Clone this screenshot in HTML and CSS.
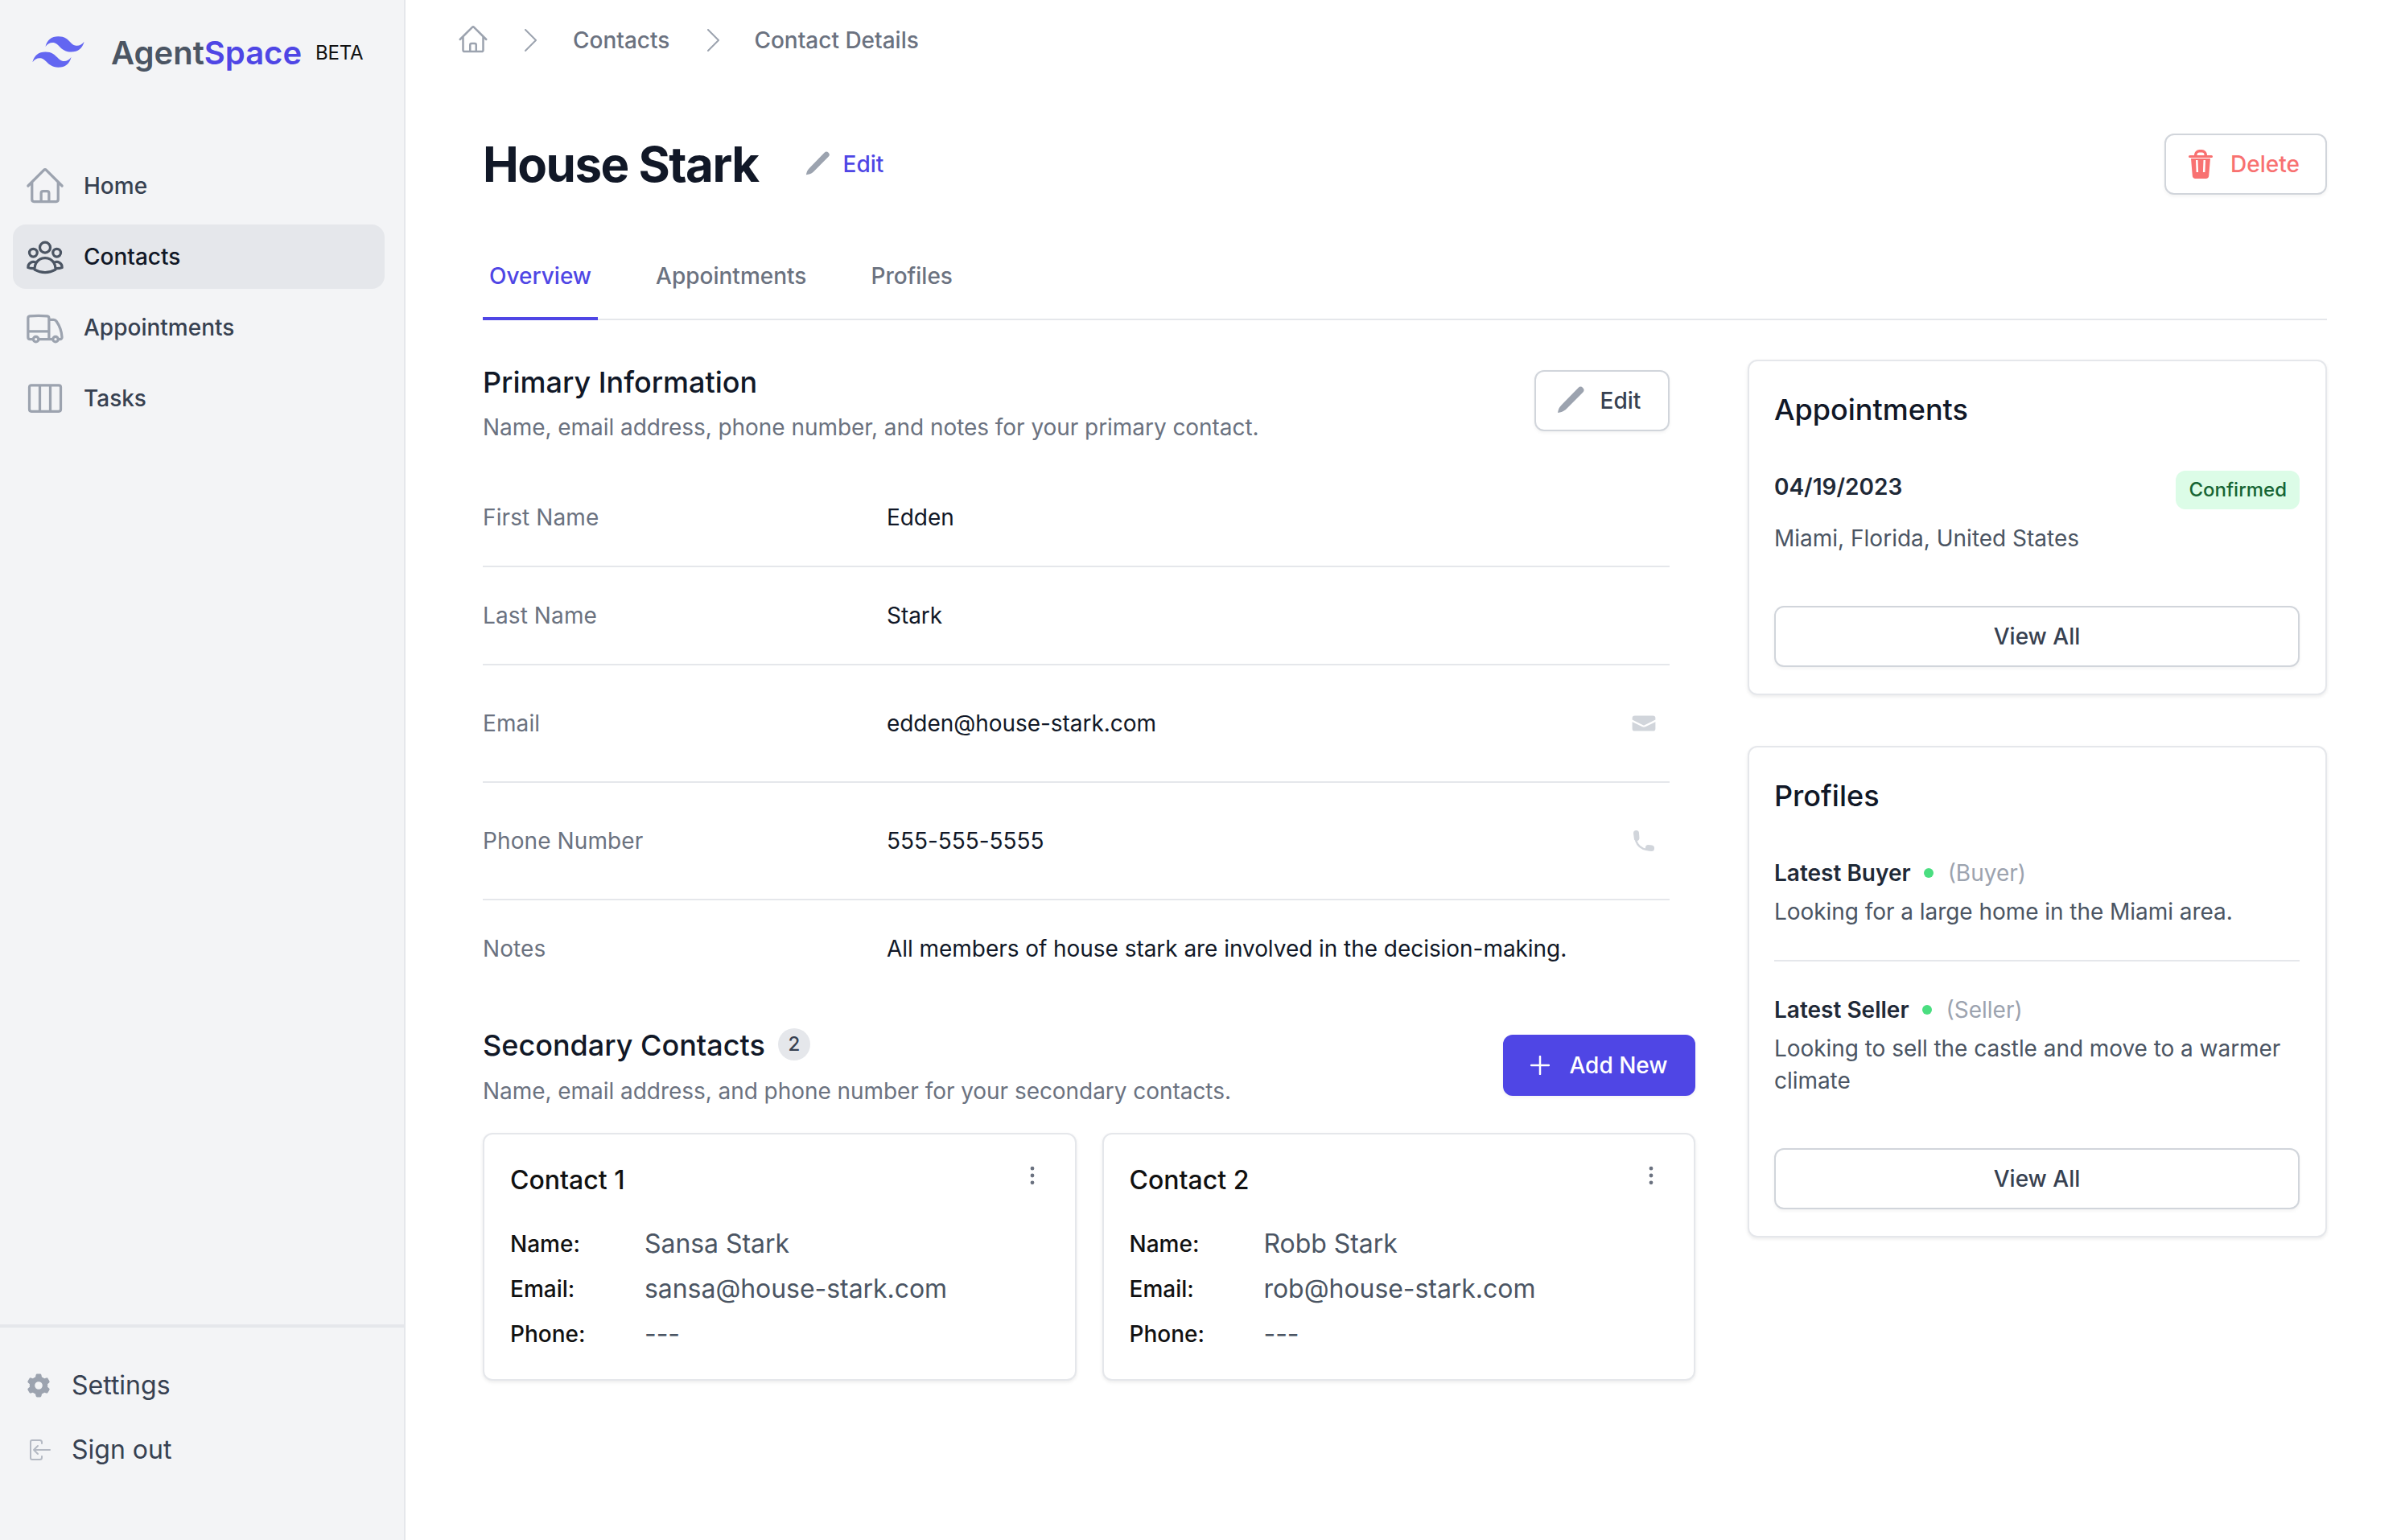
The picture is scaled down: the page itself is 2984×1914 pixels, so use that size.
FILE: index.html
```html
<!DOCTYPE html>
<html lang="en">
<head>
<meta charset="utf-8">
<title>House Stark</title>
<link rel="stylesheet" href="styles.css">
</head>
<body>
<div class="app">
  <aside class="sidebar">
    <div class="brand">
      <svg class="brand-mark" viewBox="0 0 24 24" fill="#6366f1"><path d="M12 6.036c-2.667 0-4.333 1.325-5 3.976 1-1.325 2.167-1.822 3.5-1.491.761.189 1.305.738 1.906 1.345C13.387 10.855 14.522 12 17 12c2.667 0 4.333-1.325 5-3.976-1 1.325-2.167 1.822-3.5 1.491-.761-.189-1.305-.738-1.906-1.345-.98-.99-2.115-2.134-4.594-2.134zM7 12c-2.667 0-4.333 1.325-5 3.976 1-1.325 2.167-1.822 3.5-1.491.761.189 1.305.738 1.906 1.345.98.99 2.115 2.134 4.594 2.134 2.667 0 4.333-1.325 5-3.976-1 1.325-2.167 1.822-3.5 1.491-.761-.189-1.305-.738-1.906-1.345C10.613 13.145 9.478 12 7 12z"/></svg>
      <span class="brand-name">Agent<span class="brand-accent">Space</span></span>
      <span class="brand-beta">BETA</span>
    </div>
    <nav class="nav">
      <a class="nav-item"><svg class="nav-icon" viewBox="0 0 24 24"><path d="M2.25 12l8.954-8.955c.44-.439 1.152-.439 1.591 0L21.75 12M4.5 9.75v10.125c0 .621.504 1.125 1.125 1.125H9.75v-4.875c0-.621.504-1.125 1.125-1.125h2.25c.621 0 1.125.504 1.125 1.125V21h4.125c.621 0 1.125-.504 1.125-1.125V9.75M8.25 21h8.25"/></svg>Home</a>
      <a class="nav-item is-active"><svg class="nav-icon" viewBox="0 0 24 24"><path d="M18 18.72a9.094 9.094 0 003.741-.479 3 3 0 00-4.682-2.72m.94 3.198l.001.031c0 .225-.012.447-.037.666A11.944 11.944 0 0112 21c-2.17 0-4.207-.576-5.963-1.584A6.062 6.062 0 016 18.719m12 0a5.971 5.971 0 00-.941-3.197m0 0A5.995 5.995 0 0012 12.75a5.995 5.995 0 00-5.058 2.772m0 0a3 3 0 00-4.681 2.72 8.986 8.986 0 003.74.477m.94-3.197a5.971 5.971 0 00-.94 3.197M15 6.75a3 3 0 11-6 0 3 3 0 016 0zm6 3a2.25 2.25 0 11-4.5 0 2.25 2.25 0 014.5 0zm-13.5 0a2.25 2.25 0 11-4.5 0 2.25 2.25 0 014.5 0z"/></svg>Contacts</a>
      <a class="nav-item"><svg class="nav-icon" viewBox="0 0 24 24"><path d="M8.25 18.75a1.5 1.5 0 01-3 0m3 0a1.5 1.5 0 00-3 0m3 0h6m-9 0H3.375a1.125 1.125 0 01-1.125-1.125V14.25m17.25 4.5a1.5 1.5 0 01-3 0m3 0a1.5 1.5 0 00-3 0m3 0h1.125c.621 0 1.129-.504 1.09-1.124a17.902 17.902 0 00-3.213-9.193 2.056 2.056 0 00-1.58-.86H14.25M16.5 18.75h-2.25m0-11.177v-.958c0-.568-.422-1.048-.987-1.106a48.554 48.554 0 00-10.026 0 1.106 1.106 0 00-.987 1.106v7.635m12-6.677v6.677m0 4.5v-4.5m0 0h-12"/></svg>Appointments</a>
      <a class="nav-item"><svg class="nav-icon" viewBox="0 0 24 24"><path d="M9 4.5v15m6-15v15m-10.875 0h15.75c.621 0 1.125-.504 1.125-1.125V5.625c0-.621-.504-1.125-1.125-1.125H4.125C3.504 4.5 3 5.004 3 5.625v12.75c0 .621.504 1.125 1.125 1.125z"/></svg>Tasks</a>
    </nav>
    <div class="side-foot">
      <a class="foot-item"><svg class="foot-icon" viewBox="0 0 20 20" fill="#9ca3af"><path fill-rule="evenodd" d="M7.84 1.804A1 1 0 018.82 1h2.36a1 1 0 01.98.804l.331 1.652a6.993 6.993 0 011.929 1.115l1.598-.54a1 1 0 011.186.447l1.18 2.044a1 1 0 01-.205 1.251l-1.267 1.113a7.047 7.047 0 010 2.228l1.267 1.113a1 1 0 01.206 1.25l-1.18 2.045a1 1 0 01-1.187.447l-1.598-.54a6.993 6.993 0 01-1.929 1.115l-.33 1.652a1 1 0 01-.98.804H8.82a1 1 0 01-.98-.804l-.331-1.652a6.993 6.993 0 01-1.929-1.115l-1.598.54a1 1 0 01-1.186-.447l-1.18-2.044a1 1 0 01.205-1.251l1.267-1.114a7.05 7.05 0 010-2.227L1.821 7.773a1 1 0 01-.206-1.25l1.18-2.045a1 1 0 011.187-.447l1.598.54A6.993 6.993 0 017.51 3.456l.33-1.652zM10 13a3 3 0 100-6 3 3 0 000 6z"/></svg>Settings</a>
      <a class="foot-item"><svg class="foot-icon" viewBox="0 0 32 32" fill="none" stroke="#b4b9c3" stroke-width="2" stroke-linecap="round" stroke-linejoin="round"><path d="M20 8V6.5A2.5 2.5 0 0 0 17.500 4H8A2 2 0 0 0 6 6v20a2 2 0 0 0 2 2h9.500a2.500 2.500 0 0 0 2.500-2.500V24M30 16H10M15 11l-5 5 5 5"/></svg>Sign out</a>
    </div>
  </aside>

  <main class="main">
    <div class="crumbs">
      <svg class="crumb-home" viewBox="0 0 24 24"><path d="M2.250 12l8.954-8.955c.44-.439 1.152-.439 1.591 0L21.750 12M4.500 9.750v10.125c0 .621.504 1.125 1.125 1.125H9.750v-4.875c0-.621.504-1.125 1.125-1.125h2.250c.621 0 1.125.504 1.125 1.125V21h4.125c.621 0 1.125-.504 1.125-1.125V9.750M8.250 21h8.250"/></svg>
      <svg class="crumb-sep" viewBox="0 0 16 28"><path d="M1 1l13 13L1 27"/></svg>
      <span>Contacts</span>
      <svg class="crumb-sep" viewBox="0 0 16 28"><path d="M1 1l13 13L1 27"/></svg>
      <span>Contact Details</span>
    </div>

    <header class="title-row">
      <h1 class="title">House Stark</h1>
      <a class="title-edit"><svg class="pencil-sm" viewBox="0 0 36 36" fill="#9ca3af"><path d="M1 33C1.500 29 3 26 6 23L26.500 2A4 4 0 0 1 32.200 7.700L11 29C8 31.500 5 32.500 1 33Z"/></svg>Edit</a>
      <button class="btn btn-delete"><svg class="trash" viewBox="0 0 30 36" fill="#f87171"><path fill-rule="evenodd" d="M7 7V6.500A6.500 6.500 0 0 1 13.500 0h3A6.500 6.500 0 0 1 23 6.500V7h5.500a1.500 1.500 0 0 1 0 3H1.500a1.500 1.500 0 0 1 0-3zM10.500 7h9V6.500a3 3 0 0 0-3-3h-3a3 3 0 0 0-3 3zM3 11h24l-1.800 21.500A3.800 3.800 0 0 1 21.400 36H8.600a3.800 3.800 0 0 1-3.800-3.500zM9 13l.6 15h2.500l-.6-15zM18.500 13l-.6 15h2.500l.6-15z"/></svg>Delete</button>
    </header>

    <div class="tabs">
      <a class="tab is-active">Overview</a>
      <a class="tab">Appointments</a>
      <a class="tab">Profiles</a>
    </div>

    <div class="columns">
      <div class="col-left">
        <section class="primary">
          <div class="section-head">
            <div>
              <h2 class="section-title">Primary Information</h2>
              <p class="section-sub">Name, email address, phone number, and notes for your primary contact.</p>
            </div>
            <button class="btn btn-edit"><svg class="pencil-lg" viewBox="0 0 36 36" fill="#9ca3af"><path d="M1 33C1.500 29 3 26 6 23L26.500 2A4 4 0 0 1 32.200 7.700L11 29C8 31.500 5 32.500 1 33Z"/></svg>Edit</button>
          </div>
          <dl class="fields">
            <div class="field"><dt>First Name</dt><dd>Edden</dd></div>
            <div class="field"><dt>Last Name</dt><dd>Stark</dd></div>
            <div class="field field-action"><dt>Email</dt><dd>edden@house-stark.com</dd>
              <svg class="field-icon" viewBox="0 0 20 20" fill="#d1d5db"><path d="M3 4a2 2 0 00-2 2v1.161l8.441 4.221a1.250 1.250 0 001.118 0L19 7.162V6a2 2 0 00-2-2H3z"/><path d="M19 8.839l-7.770 3.885a2.750 2.750 0 01-2.460 0L1 8.839V14a2 2 0 002 2h14a2 2 0 002-2V8.839z"/></svg></div>
            <div class="field field-action"><dt>Phone Number</dt><dd>555-555-5555</dd>
              <svg class="field-icon" viewBox="0 0 32 32"><path fill="none" stroke="#d1d5db" stroke-width="2.500" d="M6 15C8 22 12 26 20 27"/><path fill="#d1d5db" d="M3 6.500A3.500 3.500 0 0 1 6.500 3 3.500 3.500 0 0 1 10 6.500L10.500 13A3.500 3.500 0 0 1 4 14.500zM18 24.500A3.500 3.500 0 0 1 21.500 21L26 21.500A3.700 3.700 0 0 1 29 25.500 3.500 3.500 0 0 1 25.500 29L21 28.500A3.700 3.700 0 0 1 18 24.500z"/></svg></div>
            <div class="field"><dt>Notes</dt><dd>All members of house stark are involved in the decision-making.</dd></div>
          </dl>
        </section>

        <section class="secondary">
          <div class="section-head section-head-sec">
            <div>
              <h2 class="section-title">Secondary Contacts <span class="count">2</span></h2>
              <p class="section-sub section-sub-sec">Name, email address, and phone number for your secondary contacts.</p>
            </div>
            <button class="btn btn-primary"><svg class="plus" viewBox="0 0 24 24"><path d="M12 1v22M1 12h22"/></svg>Add New</button>
          </div>
          <div class="contact-grid">
            <article class="card contact">
              <div class="contact-head"><h3 class="contact-title">Contact 1</h3><svg class="kebab" viewBox="0 0 20 20" fill="#6b7280"><path d="M10 3a1.500 1.500 0 110 3 1.500 1.500 0 010-3zM10 8.500a1.500 1.500 0 110 3 1.500 1.500 0 010-3zM11.500 15.500a1.500 1.500 0 10-3 0 1.500 1.500 0 003 0z"/></svg></div>
              <dl class="contact-rows">
                <div class="contact-row"><dt>Name:</dt><dd>Sansa Stark</dd></div>
                <div class="contact-row"><dt>Email:</dt><dd>sansa@house-stark.com</dd></div>
                <div class="contact-row"><dt>Phone:</dt><dd>---</dd></div>
              </dl>
            </article>
            <article class="card contact">
              <div class="contact-head"><h3 class="contact-title">Contact 2</h3><svg class="kebab" viewBox="0 0 20 20" fill="#6b7280"><path d="M10 3a1.500 1.500 0 110 3 1.500 1.500 0 010-3zM10 8.500a1.500 1.500 0 110 3 1.500 1.500 0 010-3zM11.500 15.500a1.500 1.500 0 10-3 0 1.500 1.500 0 003 0z"/></svg></div>
              <dl class="contact-rows">
                <div class="contact-row"><dt>Name:</dt><dd>Robb Stark</dd></div>
                <div class="contact-row"><dt>Email:</dt><dd>rob@house-stark.com</dd></div>
                <div class="contact-row"><dt>Phone:</dt><dd>---</dd></div>
              </dl>
            </article>
          </div>
        </section>
      </div>

      <div class="col-right">
        <section class="card side-card appts">
          <h2 class="side-title">Appointments</h2>
          <div class="appt-top"><span class="appt-date">04/19/2023</span><span class="pill">Confirmed</span></div>
          <p class="appt-place">Miami, Florida, United States</p>
          <button class="btn btn-block">View All</button>
        </section>
        <section class="card side-card profiles">
          <h2 class="side-title">Profiles</h2>
          <div class="profile">
            <div class="profile-line"><strong>Latest Buyer</strong><i class="dot"></i><span class="role">(Buyer)</span></div>
            <p class="profile-desc">Looking for a large home in the Miami area.</p>
          </div>
          <div class="profile profile-next">
            <div class="profile-line"><strong>Latest Seller</strong><i class="dot"></i><span class="role">(Seller)</span></div>
            <p class="profile-desc">Looking to sell the castle and move to a warmer climate</p>
          </div>
          <button class="btn btn-block">View All</button>
        </section>
      </div>
    </div>
  </main>
</div>
</body>
</html>
```
FILE: styles.css
```css
* { box-sizing: border-box; }
html, body { margin: 0; padding: 0; }
body {
  width: 2984px;
  height: 1914px;
  overflow: hidden;
  background: #fff;
  font-family: Inter, "Liberation Sans", sans-serif;
  color: #111827;
  font-size: 28px;
  line-height: 40px;
}
h1, h2, h3, p, dl, dt, dd { margin: 0; font-weight: inherit; }
.app { display: flex; height: 1914px; }

/* Sidebar */
.sidebar {
  width: 504px;
  flex: none;
  display: flex;
  flex-direction: column;
  background: #f3f4f6;
  border-right: 2px solid #e5e7eb;
}
.brand { display: flex; align-items: center; height: 132px; padding-left: 34px; }
.brand-mark { width: 77px; height: 77px; flex: none; margin-top: -4px; }
.brand-name { margin-left: 27px; font-size: 40px; font-weight: 600; line-height: 56px; color: #4b5563; }
.brand-accent { color: #4f46e5; }
.brand-beta { margin-left: 17px; font-size: 24px; color: #111; letter-spacing: -0.2px; }
.nav { display: flex; flex-direction: column; gap: 8px; padding: 59px 24px 0 16px; }
.nav-item { display: flex; align-items: center; gap: 22px; height: 80px; padding-left: 14px; border-radius: 16px; color: #374151; font-weight: 500; }
.nav-item.is-active { background: #e5e7eb; color: #111827; }
.nav-icon { width: 52px; height: 52px; flex: none; fill: none; stroke: #9ca3af; stroke-width: 1.500; stroke-linecap: round; stroke-linejoin: round; }
.is-active .nav-icon { stroke: #4b5563; }
.side-foot { margin-top: auto; height: 268px; border-top: 4px solid #e5e7eb; padding: 48px 0 0 32px; display: flex; flex-direction: column; gap: 32px; }
.foot-item { display: flex; align-items: center; gap: 25px; height: 48px; font-size: 32px; color: #374151; }
.foot-icon { width: 32px; height: 32px; flex: none; }

/* Main */
.main { flex: 1; min-width: 0; padding: 0 92px 0 96px; }
.crumbs { display: flex; align-items: center; height: 100px; color: #6b7280; font-weight: 500; }
.crumb-home { width: 40px; height: 40px; margin-left: -32px; margin-top: -2px; fill: none; stroke: #9ca3af; stroke-width: 1.500; stroke-linecap: round; stroke-linejoin: round; }
.crumb-sep { width: 16px; height: 28px; margin: 0 44px 0 44px; fill: none; stroke: #9ca3af; stroke-width: 2; stroke-linecap: round; stroke-linejoin: round; }
.crumbs span + .crumb-sep { margin: 0 42px 0 47px; }
.title-row { display: flex; align-items: center; margin-top: 66px; height: 76px; }
.title { font-size: 60px; font-weight: 700; line-height: 76px; letter-spacing: -1.500px; color: #111827; }
.title-edit { display: flex; align-items: center; gap: 15px; margin-left: 58px; color: #4f46e5; font-weight: 500; }
.pencil-sm { width: 32px; height: 32px; }
.pencil-lg { width: 36px; height: 36px; }
.trash { width: 30px; height: 36px; }
.btn {
  display: inline-flex;
  align-items: center;
  justify-content: center;
  height: 76px;
  padding: 0;
  border: 2px solid #d1d5db;
  border-radius: 12px;
  background: #fff;
  box-shadow: 0 2px 4px rgba(0,0,0,.05);
  font: 500 28px/40px Inter, "Liberation Sans", sans-serif;
  color: #374151;
}
.btn-delete { margin-left: auto; width: 202px; gap: 22px; padding-right: 4px; color: #f87171; }
.tabs { display: flex; gap: 64px; margin-top: 60px; padding-top: 21px; height: 96px; border-bottom: 2px solid #e5e7eb; }
.tab { height: 73px; padding: 0 8px; color: #6b7280; font-weight: 500; }
.tab.is-active { height: 75px; color: #4f46e5; border-bottom: 4px solid #4f46e5; }

.columns { display: flex; gap: 65px; margin-top: 49px; align-items: flex-start; }
.col-left { width: 1507px; flex: none; }
.col-right { flex: 1; display: flex; flex-direction: column; gap: 63px; }

.primary { padding-right: 32px; }
.section-head { display: flex; justify-content: space-between; align-items: flex-start; }
.section-title { font-size: 36px; font-weight: 500; line-height: 56px; color: #111827; display: flex; align-items: center; gap: 16px; }
.section-sub { margin-top: 8px; color: #6b7280; letter-spacing: -0.05px; }
.section-sub-sec { margin-top: 9px; }
.btn-edit { width: 168px; gap: 18px; margin-top: 13px; padding-right: 8px; }
.fields { margin-top: 32px; }
.field { display: grid; grid-template-columns: 502px 1fr auto; align-items: center; padding: 40px 0; border-bottom: 2px solid #e5e7eb; }
.field:last-child { border-bottom: 0; padding-bottom: 0; }
.field dt { color: #6b7280; letter-spacing: 0.1px; }
.field dd { letter-spacing: -0.05px; }
.field-action { padding: 40px 0; height: 146px; }
.field-icon { width: 32px; height: 32px; margin-right: 16px; }

.secondary { margin-top: 72px; }
.section-head-sec { align-items: center; }
.count { display: inline-flex; align-items: center; justify-content: center; width: 40px; height: 40px; border-radius: 50%; background: #e5e7eb; color: #374151; font-size: 24px; font-weight: 500; margin-top: -2px; }
.btn-primary { width: 239px; height: 76px; gap: 24px; background: #4f46e5; border-color: #4f46e5; color: #fff; }
.plus { width: 24px; height: 24px; fill: none; stroke: #fff; stroke-width: 2.500; stroke-linecap: round; }
.card { background: #fff; border: 2px solid #e5e7eb; border-radius: 12px; box-shadow: 0 2px 4px rgba(0,0,0,.08); }
.contact-grid { display: grid; grid-template-columns: 1fr 1fr; gap: 32px; margin-top: 32px; }
.contact { height: 308px; padding: 33px 32px; }
.contact-head { display: flex; justify-content: space-between; align-items: flex-start; }
.contact-title { font-size: 32px; font-weight: 500; line-height: 48px; color: #111; }
.kebab { width: 32px; height: 32px; margin-top: 2px; margin-right: 5px; }
.contact-rows { margin-top: 31px; display: flex; flex-direction: column; gap: 8px; }
.contact-row { display: grid; grid-template-columns: 167px 1fr; align-items: center; height: 48px; }
.contact-row dt { font-weight: 500; color: #111; }
.contact-row dd { font-size: 32px; color: #4b5563; letter-spacing: -0.05px; }

.side-card { padding: 32px 32px 32px 31px; }
.side-title { font-size: 36px; font-weight: 500; line-height: 56px; color: #111827; }
.appts { height: 417px; }
.appt-top { display: flex; justify-content: space-between; align-items: center; margin-top: 48px; }
.appt-date { font-weight: 600; color: #1f2937; margin-top: -8px; }
.pill { display: inline-flex; align-items: center; height: 48px; padding: 0 16px; border-radius: 12px; background: #dcfce7; color: #166534; font-size: 24px; font-weight: 500; }
.appt-place { margin-top: 16px; color: #4b5563; }
.btn-block { display: flex; width: 100%; margin-top: 64px; }
.profiles { height: 611px; }
.profile { margin-top: 48px; padding-bottom: 40px; border-bottom: 2px solid #e5e7eb; }
.profile-next { margin-top: 40px; padding-bottom: 0; border-bottom: 0; }
.profile-line { display: flex; align-items: center; }
.profile-line strong { font-weight: 600; color: #1f2937; }
.dot { width: 12px; height: 12px; border-radius: 50%; background: #4ade80; margin: 0 18px 0 16px; }
.role { color: #9ca3af; }
.profile-desc { margin-top: 8px; color: #4b5563; letter-spacing: -0.05px; }
```
